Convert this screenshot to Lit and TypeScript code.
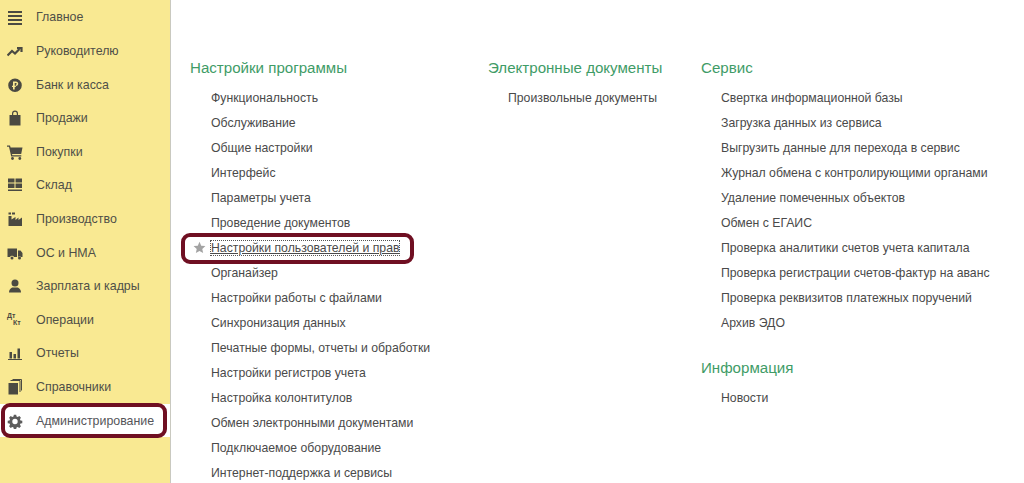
import { LitElement, html, css, svg } from "lit";
import { customElement } from "lit/decorators.js";

const icons: Record<string, unknown> = {
  menu: svg`<path d="M1 2h14v2H1zM1 6h14v2H1zM1 10h14v2H1zM1 14h14v2H1z"/>`,
  trend: svg`<path d="M0.500 12.500 5 8l3 2.500L12.500 6M10 5h4.500v4" fill="none" stroke="currentColor" stroke-width="2.200"/>`,
  ruble: svg`<path fill-rule="evenodd" d="M8 1.500a6.800 6.800 0 1 1 0 13.600A6.800 6.800 0 0 1 8 1.500zM6 4.500v4.200H5v1.300h1v2.500h1.700V10h1.100V8.700H7.700V5.900h1.200c1.100 0 1.100 1.700 0 1.700v1.300c3.100 0 3.100-4.400 0-4.400z"/>`,
  bag: svg`<path fill-rule="evenodd" d="M2.500 5H5V3.500a3 3 0 0 1 6 0V5h2.500v10.500h-11zM6.200 5h3.600V3.500a1.800 1.800 0 0 0-3.600 0z"/>`,
  cart: svg`<path d="M0 1.500h3l.6 2H15.500l-1.300 6.500H5l.3 1.200h9v1.300H4.200L2 2.800H0z"/><circle cx="5.500" cy="14.500" r="1.400"/><circle cx="12.800" cy="14.500" r="1.400"/>`,
  store: svg`<path d="M1 1.500h6.500v4H1zM8.500 1.500H15v4H8.500zM1 6.500h6.500v4.500H1zM8.500 6.500H15v4.500H8.500zM1 12.500h14v1.500H1z"/>`,
  factory: svg`<path d="M1.500 1.500h2.500v2H1.500zM5 1.500h3v2H5zM1.500 5h3v3.500L8.500 6v3l3-2.500V9L15 6.500v8.500H1.500z"/>`,
  truck: svg`<path d="M0.500 3.500h9.500v8.500H7a2.200 2.200 0 0 0-4 0H0.500zM11 5.500h2.500l2 2.500v4H14a2.200 2.200 0 0 0-3 0z"/><circle cx="5" cy="13" r="1.500"/><circle cx="12.500" cy="13" r="1.500"/>`,
  user: svg`<circle cx="8" cy="5" r="3.500"/><path d="M2 14.500c0-3.500 2.500-5 4-5h4c1.500 0 4 1.500 4 5z"/>`,
  bars: svg`<path d="M2.500 7h2.500v6.500H2.500zM6.500 9h2.500v4.500H6.500zM10.500 3.500h2.500v10h-2.500zM1 14h14v1H1z"/>`,
  books: svg`<path d="M1.500 4h9.500v11.500H1.500z"/><path d="M3.500 1.500h9.500v11.500M5.500 0.500h9v11" fill="none" stroke="currentColor" stroke-width="1"/>`,
  gear: svg`<path fill-rule="evenodd" d="M6.700 1h2.600l.4 2 1.300.6 1.800-1.100 1.800 1.800-1.100 1.800.6 1.300 2 .4v2.600l-2 .4-.6 1.300 1.100 1.800-1.800 1.800-1.800-1.100-1.300.6-.4 2H6.700l-.4-2-1.300-.6-1.800 1.100-1.800-1.800 1.100-1.800-.6-1.300-2-.4V7.800l2-.4.6-1.300-1.100-1.800 1.800-1.800 1.800 1.100 1.300-.6zM8 5.500a3 3 0 1 0 0 6 3 3 0 0 0 0-6z" transform="translate(0.800 0.800) scale(.9)"/>`,
};

const nav: [string, string][] = [
  ["menu", "Главное"], ["trend", "Руководителю"], ["ruble", "Банк и касса"], ["bag", "Продажи"],
  ["cart", "Покупки"], ["store", "Склад"], ["factory", "Производство"], ["truck", "ОС и НМА"],
  ["user", "Зарплата и кадры"], ["dtkt", "Операции"], ["bars", "Отчеты"], ["books", "Справочники"],
  ["gear", "Администрирование"],
];

const col1 = ["Функциональность", "Обслуживание", "Общие настройки", "Интерфейс", "Параметры учета", "Проведение документов", "Настройки пользователей и прав", "Органайзер", "Настройки работы с файлами", "Синхронизация данных", "Печатные формы, отчеты и обработки", "Настройки регистров учета", "Настройка колонтитулов", "Обмен электронными документами", "Подключаемое оборудование", "Интернет-поддержка и сервисы"];
const col2 = ["Произвольные документы"];
const col3 = ["Свертка информационной базы", "Загрузка данных из сервиса", "Выгрузить данные для перехода в сервис", "Журнал обмена с контролирующими органами", "Удаление помеченных объектов", "Обмен с ЕГАИС", "Проверка аналитики счетов учета капитала", "Проверка регистрации счетов-фактур на аванс", "Проверка реквизитов платежных поручений", "Архив ЭДО"];

@customElement("app-root")
export class AppRoot extends LitElement {
  static styles = css`
    :host { display: block; width: 1024px; height: 483px; overflow: hidden; background: #fff; font-family: "Liberation Sans", Arial, sans-serif; position: relative; }
    .page { display: flex; height: 483px; }
    .side { width: 170px; flex: none; background: #f9e992; border-right: 1px solid #c9c9c0; padding-top: 0.500px; box-sizing: content-box; }
    .item { display: flex; align-items: center; height: 33.620px; font-size: 12.400px; color: #4f4f48; }
    .item.active { background: #fff; color: #55555a; }
    .ic { width: 16px; height: 16px; margin-left: 7px; margin-right: 13px; color: #4b4a42; flex: none; fill: currentColor; display: block; }
    .item.active .ic { color: #5c5c5c; }
    .dtkt { width: 16px; height: 16px; margin-left: 7px; margin-right: 13px; flex: none; font: bold 7px/7px "Liberation Sans", sans-serif; color: #4b4a42; }
    .dtkt span { display: block; }
    .dtkt span + span { padding-left: 6px; }
    .main { display: flex; flex: 1; padding-top: 58px; align-items: flex-start; }
    .col { display: flex; flex-direction: column; }
    .c1 { margin-left: 19px; width: 298px; }
    .c1 ul { padding-left: 21px; }
    .c2 { width: 213px; }
    h2 { margin: 0; font-weight: 400; font-size: 15.100px; line-height: 19px; color: #3f9c67; }
    ul { list-style: none; margin: 9px 0 0; padding: 0 0 0 20px; }
    li { height: 25px; line-height: 25px; font-size: 12.250px; color: #4a4a4a; white-space: nowrap; position: relative; }
    li.cur span { outline: 1px dotted #555; text-decoration: underline; }
    .star { position: absolute; left: -18px; top: 5px; width: 13px; height: 13px; fill: #a3a3a3; }
    .sec2 { margin-top: 22px; }
    .ring { position: absolute; border: 4px solid #6f0f22; border-radius: 9px; pointer-events: none; box-sizing: border-box; }
    .r1 { left: 1px; top: 403px; width: 166px; height: 35px; }
    .r2 { left: 181px; top: 233px; width: 233px; height: 31px; }
  `;

  private link(t: string) {
    const cur = t === "Настройки пользователей и прав";
    return html`<li class=${cur ? "cur" : ""}>${cur ? html`<svg class="star" viewBox="0 0 16 16"><path d="M8 1l2.100 4.800 5.200.5-3.900 3.500 1.100 5.100L8 12.200l-4.500 2.700 1.100-5.100L.7 6.300l5.200-.5z"/></svg>` : ""}<span>${t}</span></li>`;
  }

  render() {
    return html`
      <div class="page">
        <nav class="side">
          ${nav.map(([ic, t]) => html`<div class="item ${ic === "gear" ? "active" : ""}">
            ${ic === "dtkt"
              ? html`<div class="dtkt"><span>Дт</span><span>Кт</span></div>`
              : html`<svg class="ic" viewBox="0 0 16 16">${icons[ic]}</svg>`}
            <span>${t}</span></div>`)}
        </nav>
        <main class="main">
          <section class="col c1"><h2>Настройки программы</h2><ul>${col1.map((t) => this.link(t))}</ul></section>
          <section class="col c2"><h2>Электронные документы</h2><ul>${col2.map((t) => this.link(t))}</ul></section>
          <section class="col">
            <h2>Сервис</h2><ul>${col3.map((t) => this.link(t))}</ul>
            <h2 class="sec2">Информация</h2><ul>${this.link("Новости")}</ul>
          </section>
        </main>
      </div>
      <div class="ring r1"></div>
      <div class="ring r2"></div>
    `;
  }
}
